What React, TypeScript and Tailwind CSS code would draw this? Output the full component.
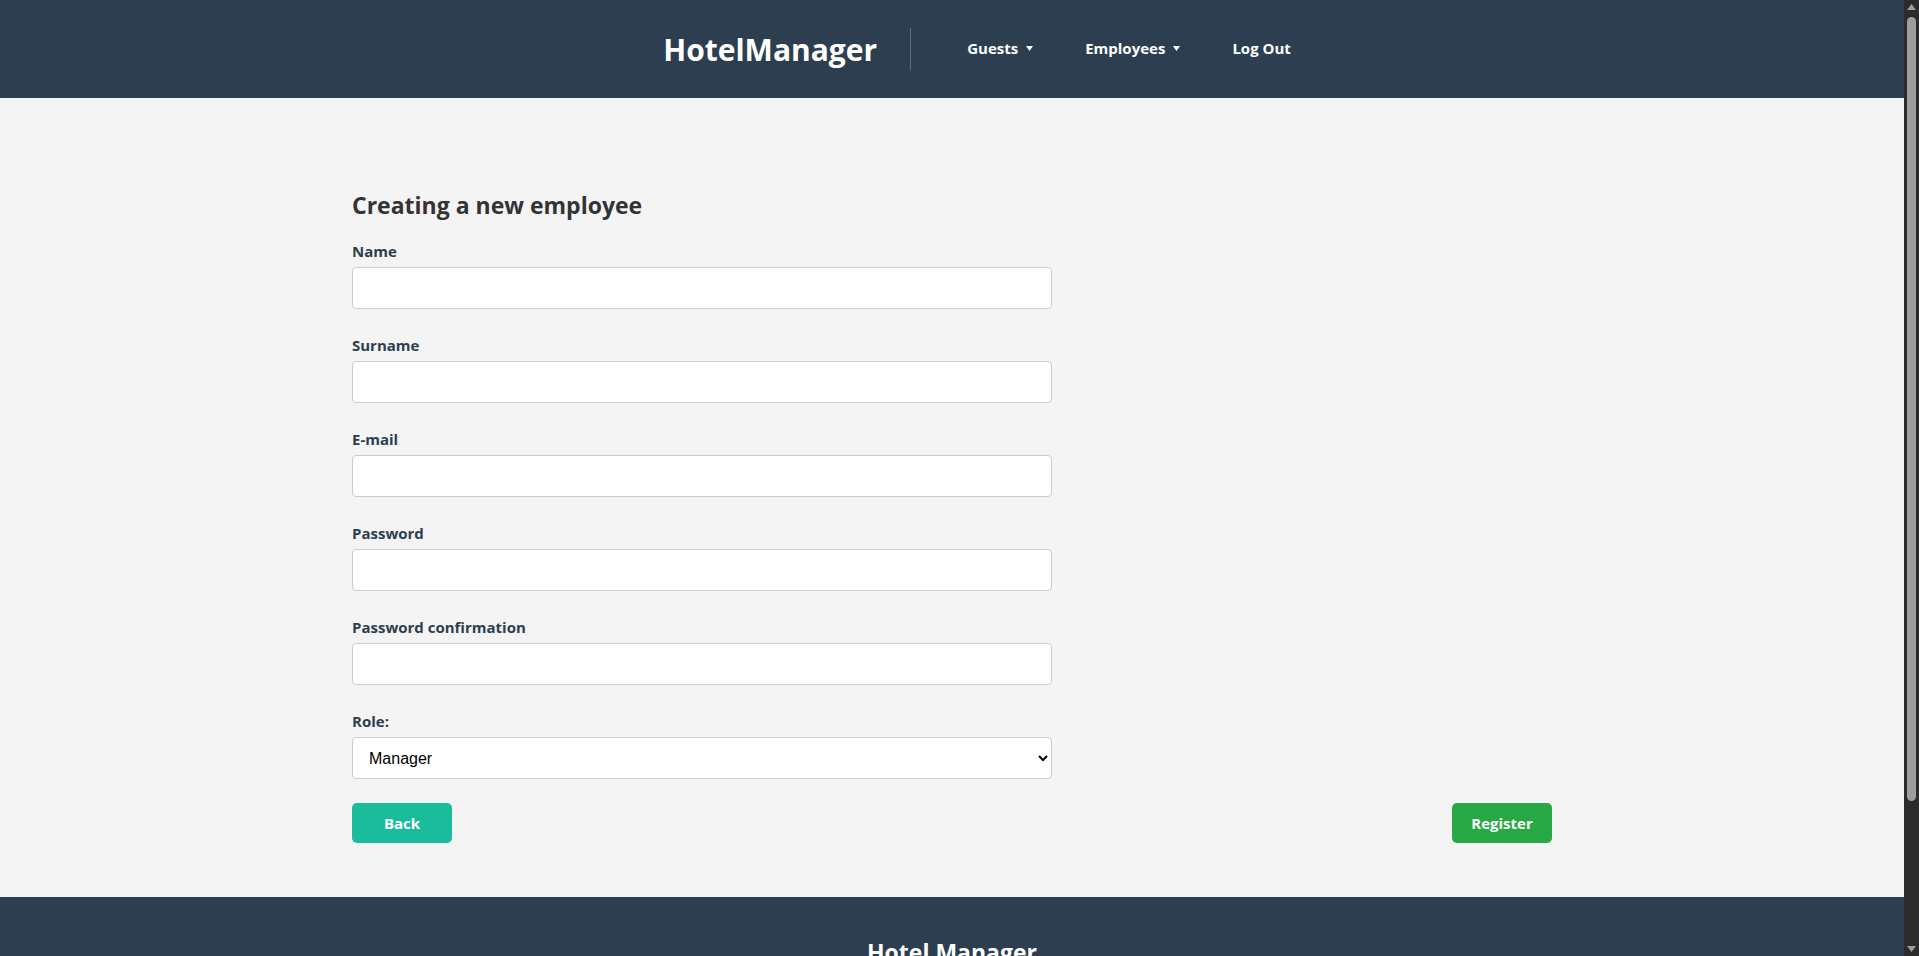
import { useState } from "react";

const font = { fontFamily: "'Open Sans', 'Noto Sans', sans-serif" };

function Caret() {
  return (
    <svg width="7" height="5" viewBox="0 0 7 5" className="ml-[8px]">
      <path d="M0 0h7L3.5 5z" fill="white" />
    </svg>
  );
}

function Field({ label, type = "text" }: { label: string; type?: string }) {
  return (
    <div className="mb-[26px]">
      <label className="block mb-[6px] text-[15px] leading-[20px] font-bold text-[#2c3e50]">{label}</label>
      <input
        type={type}
        className="block w-full h-[42px] px-3 bg-white border border-[#cccccc] rounded-[4px] outline-none"
      />
    </div>
  );
}

// browser scrollbar as it shows in the screenshot
function ScrollTrack() {
  return (
    <div className="fixed top-0 right-0 h-screen w-[15px] bg-[#2b2b2b] flex flex-col items-center">
      <svg width="9" height="6" viewBox="0 0 9 6" className="mt-[4px]">
        <path d="M0 6h9L4.5 0z" fill="#9e9e9e" />
      </svg>
      <div className="w-[9px] h-[784px] mt-[7px] rounded-full bg-[#9e9e9e]" />
      <div className="flex-1" />
      <svg width="9" height="6" viewBox="0 0 9 6" className="mb-[4px]">
        <path d="M0 0h9L4.5 6z" fill="#9e9e9e" />
      </svg>
    </div>
  );
}

export default function App() {
  const [role, setRole] = useState("Manager");

  return (
    <div className="min-h-screen bg-[#f4f4f4]" style={font}>
      <div className="mr-[15px]">
        {/* Header */}
        <header className="h-[98px] bg-[#2c3e50] flex items-center justify-center">
          <div className="flex items-center pl-[50px]">
            <span className="text-[30px] font-bold text-white leading-[30px] mt-[2px]">HotelManager</span>
            <div className="w-px h-[42px] bg-[#5d6d7e] ml-[33px] mr-[56px]" />
            <nav className="flex items-center gap-[52px] mb-[2px] text-[15px] font-bold text-white">
              <a className="flex items-center cursor-pointer">Guests<Caret /></a>
              <a className="flex items-center cursor-pointer">Employees<Caret /></a>
              <a className="cursor-pointer">Log Out</a>
            </nav>
          </div>
        </header>

        {/* Form */}
        <main className="pt-[92px] pb-[54px]">
          <div className="w-[1200px] mx-auto">
            <h2 className="text-[23px] leading-[30px] font-bold text-[#333333] mb-[21px]">Creating a new employee</h2>
            <form className="w-[700px]" onSubmit={(e) => e.preventDefault()}>
              <Field label="Name" />
              <Field label="Surname" />
              <Field label="E-mail" type="email" />
              <Field label="Password" type="password" />
              <Field label="Password confirmation" type="password" />
              <div>
                <label className="block mb-[6px] text-[15px] leading-[20px] font-bold text-[#2c3e50]">Role:</label>
                <select
                  value={role}
                  onChange={(e) => setRole(e.target.value)}
                  className="block w-full h-[42px] pl-3 pr-2 bg-white border border-[#cccccc] rounded-[4px] text-[16px] text-black outline-none"
                  style={{ fontFamily: "'Liberation Sans', Arial, sans-serif" }}
                >
                  <option>Manager</option>
                  <option>Receptionist</option>
                  <option>Cleaner</option>
                </select>
              </div>
            </form>
            <div className="flex justify-between mt-[24px]">
              <button className="w-[100px] h-[40px] rounded-[5px] bg-[#1abc9c] text-white font-bold text-[15px]">Back</button>
              <button className="w-[100px] h-[40px] rounded-[5px] bg-[#28a745] text-white font-bold text-[15px]">Register</button>
            </div>
          </div>
        </main>

        {/* Footer */}
        <footer className="bg-[#2c3e50] text-white text-center pt-[40px] pb-[40px]">
          <h2 className="text-[23px] font-bold leading-[30px]">Hotel Manager</h2>
          <p className="mt-2 text-[15px] text-[#bdc3c7]">© 2024 Hotel Manager. All rights reserved.</p>
        </footer>
      </div>
      <ScrollTrack />
    </div>
  );
}
